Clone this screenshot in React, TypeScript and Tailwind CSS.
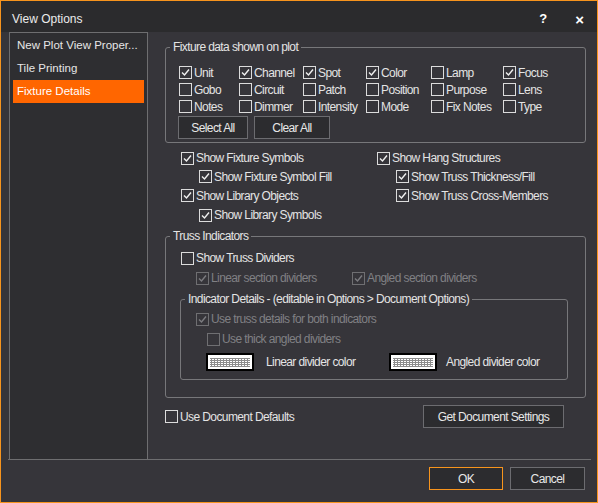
import React from 'react';

const UI = { fontFamily: '"Liberation Sans", Arial, sans-serif' };
const TXT = 'text-[12px] tracking-[-0.6px]';

interface CheckProps {
  label: string;
  checked?: boolean;
  disabled?: boolean;
  className?: string;
}

const Check: React.FC<CheckProps> = ({ label, checked, disabled, className = '' }) => (
  <div className={`flex items-center h-[17px] ${className}`}>
    <div
      className={`w-[13px] h-[13px] shrink-0 border flex items-center justify-center ${
        disabled ? 'border-[#6f6f72]' : 'border-[#dcdcdc]'
      }`}
    >
      {checked && (
        <svg width="11" height="11" viewBox="0 0 11 11">
          <path
            d="M2 5.5 L4.5 8 L9 2.5"
            fill="none"
            stroke={disabled ? '#7c7c80' : '#f0f0f0'}
            strokeWidth="1.4"
          />
        </svg>
      )}
    </div>
    <span
      className={`ml-[2px] ${TXT} leading-none whitespace-nowrap ${
        disabled ? 'text-[#808084]' : 'text-[#e4e4e4]'
      }`}
    >
      {label}
    </span>
  </div>
);

const Group: React.FC<{ title: string; className?: string; children: React.ReactNode }> = ({
  title,
  className = '',
  children,
}) => (
  <div className={`relative border border-[#77777a] rounded-[3px] ${className}`}>
    <span
      className={`absolute -top-[9px] left-[4px] px-[3px] bg-[#36353a] ${TXT} leading-[16px] text-[#e4e4e4] whitespace-nowrap`}
    >
      {title}
    </span>
    {children}
  </div>
);

const Swatch: React.FC = () => (
  <svg width="48" height="18" viewBox="0 0 48 18" className="shrink-0">
    <defs>
      <pattern id="grid" width="3" height="2" patternUnits="userSpaceOnUse">
        <rect width="3" height="2" fill="#ffffff" />
        <rect x="2" width="1" height="2" fill="#8c8c8c" />
        <rect y="1" width="3" height="1" fill="#8c8c8c" />
      </pattern>
    </defs>
    <rect x="0.5" y="0.5" width="47" height="17" fill="#ffffff" stroke="#000000" />
    <rect x="1.5" y="1.5" width="45" height="15" fill="#ffffff" stroke="#000000" strokeWidth="1" />
    <rect x="4" y="5" width="40" height="9" fill="url(#grid)" />
  </svg>
);

const Btn: React.FC<{ label: string; className?: string }> = ({ label, className = '' }) => (
  <div
    className={`h-[23px] flex items-center justify-center border border-[#6c6c70] bg-[#2c2c2f] ${TXT} text-[#e8e8e8] ${className}`}
  >
    {label}
  </div>
);

const fixtureRows: [string, boolean][][] = [
  [
    ['Unit', true],
    ['Channel', true],
    ['Spot', true],
    ['Color', true],
    ['Lamp', false],
    ['Focus', true],
  ],
  [
    ['Gobo', false],
    ['Circuit', false],
    ['Patch', false],
    ['Position', false],
    ['Purpose', false],
    ['Lens', false],
  ],
  [
    ['Notes', false],
    ['Dimmer', false],
    ['Intensity', false],
    ['Mode', false],
    ['Fix Notes', false],
    ['Type', false],
  ],
];

export default function App() {
  return (
    <div
      className="w-[598px] h-[503px] border border-[#f7941d] bg-[#36353a] flex flex-col overflow-hidden"
      style={UI}
    >
      {/* title bar */}
      <div className="h-[31px] shrink-0 bg-[#2b2b2d] flex items-center pl-[11px] pt-[5px]">
        <span className="text-[12px] text-[#ececec]">View Options</span>
        <span className="ml-auto text-[13px] font-bold text-white">?</span>
        <span className="ml-[28px] mr-[13px] text-[15px] font-bold text-white leading-none">×</span>
      </div>

      {/* body */}
      <div className="h-[427px] shrink-0 flex">
        <div className="ml-[8px] w-[139px] border-t border-l border-r border-[#6e6e70] bg-[#2e2e31] pt-[1px] px-[3px]">
          <div className="h-[23px] flex items-center pl-[4px] pt-[1px] text-[11.5px] text-[#e6e6e6] whitespace-nowrap">
            New Plot View Proper...
          </div>
          <div className="h-[23px] flex items-center pl-[4px] pt-[1px] text-[11.5px] text-[#e6e6e6]">Tile Printing</div>
          <div className="h-[23px] flex items-center pl-[4px] text-[11.5px] text-white bg-[#ff6600]">
            Fixture Details
          </div>
        </div>

        <div className="flex-1 pl-[17px] flex flex-col">
          {/* fixture data */}
          <Group title="Fixture data shown on plot" className="mt-[15px] w-[421px] h-[96px]">
            <div className="pt-[16px] pl-[13px] grid grid-cols-[60px_64px_63px_65px_72px_auto]">
              {fixtureRows.flat().map(([label, checked]) => (
                <Check key={label} label={label} checked={checked} />
              ))}
            </div>
            <div className="flex gap-[6px] pl-[12px] mt-[1px]">
              <Btn label="Select All" className="w-[70px]" />
              <Btn label="Clear All" className="w-[76px]" />
            </div>
          </Group>

          {/* symbols */}
          <div className="flex mt-[6px]">
            <div className="w-[212px] pl-[16px] flex flex-col">
              <Check label="Show Fixture Symbols" checked className="h-[18px]" />
              <Check label="Show Fixture Symbol Fill" checked className="h-[19px] ml-[18px]" />
              <Check label="Show Library Objects" checked className="h-[19px]" />
              <Check label="Show Library Symbols" checked className="h-[20px] ml-[18px]" />
            </div>
            <div className="flex flex-col">
              <Check label="Show Hang Structures" checked className="h-[18px]" />
              <Check label="Show Truss Thickness/Fill" checked className="h-[19px] ml-[19px]" />
              <Check label="Show Truss Cross-Members" checked className="h-[19px] ml-[19px]" />
            </div>
          </div>

          {/* truss indicators */}
          <Group title="Truss Indicators" className="mt-[11px] w-[421px] h-[162px]">
            <div className="pt-[12px] pl-[15px]">
              <Check label="Show Truss Dividers" className="h-[18px]" />
              <div className="flex mt-[2px] h-[18px]">
                <Check label="Linear section dividers" checked disabled className="h-[18px] ml-[15px] w-[156px]" />
                <Check label="Angled section dividers" checked disabled className="h-[18px]" />
              </div>
            </div>
            <Group
              title="Indicator Details - (editable in Options > Document Options)"
              className="mt-[12px] ml-[14px] w-[388px] h-[81px]"
            >
              <div className="pt-[10px] pl-[15px]">
                <Check label="Use truss details for both indicators" checked disabled className="h-[18px]" />
                <Check label="Use thick angled dividers" disabled className="h-[18px] mt-[2px] ml-[11px]" />
                <div className="flex items-center mt-[5px] ml-[10px]">
                  <Swatch />
                  <span className={`ml-[12px] w-[123px] ${TXT} text-[#e4e4e4]`}>Linear divider color</span>
                  <Swatch />
                  <span className={`ml-[9px] ${TXT} text-[#e4e4e4]`}>Angled divider color</span>
                </div>
              </div>
            </Group>
          </Group>

          {/* defaults */}
          <div className="flex items-center mt-[7px] w-[421px]">
            <Check label="Use Document Defaults" />
            <Btn label="Get Document Settings" className="ml-auto mr-[22px] w-[141px]" />
          </div>
        </div>
      </div>

      <div className="ml-[7px] w-[583px] h-px bg-[#6e6e70]" />

      {/* footer */}
      <div className="flex justify-end gap-[7px] pt-[7px] pr-[12px]">
        <Btn label="OK" className="w-[74px] border-[#f7941d]" />
        <Btn label="Cancel" className="w-[75px]" />
      </div>
    </div>
  );
}
